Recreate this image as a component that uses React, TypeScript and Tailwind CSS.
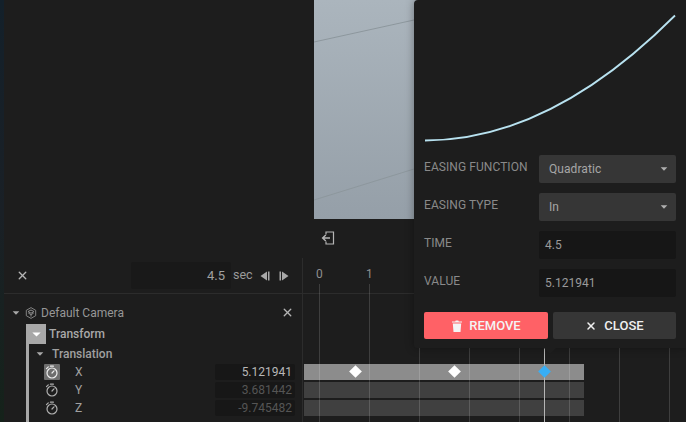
import React from 'react';
import { X } from 'lucide-react';

const Caret = ({ className }: { className: string }) => (
  <svg viewBox="0 0 10 6" className={className}>
    <path d="M0 0.5h10L5 5.5z" fill="currentColor" />
  </svg>
);

const Stopwatch = () => (
  <svg viewBox="0 0 14 14" className="h-[14px] w-[14px]" fill="none" stroke="currentColor" strokeWidth="1.2">
    <circle cx="7" cy="8" r="5" />
    <path d="M7 8l2-2.2M1.5 3.6l1.8-1.7M5.4 1.2h3" strokeLinecap="round" />
  </svg>
);

const CubeHex = () => (
  <svg viewBox="0 0 12 12" className="h-[12px] w-[12px] text-[#8f8f8f]" fill="none" stroke="currentColor" strokeWidth="0.9">
    <path d="M6 0.6l4.7 2.7v5.4L6 11.4 1.3 8.7V3.3z" />
    <path d="M6 3l3 1.6L6 6.2 3 4.6zM3.4 6.2L6 7.6l2.6-1.4M6 7.6v2" strokeWidth="1" />
  </svg>
);

const StepIcon = ({ dir }: { dir: 'prev' | 'next' }) => (
  <svg viewBox="0 0 10 10" className="h-[10px] w-[10px] text-[#a8a8a8]" fill="currentColor">
    {dir === 'prev' ? <path d="M7 0.5v9L0.5 5zM8 0.5h1.5v9H8z" /> : <path d="M3 0.5v9L9.5 5zM0.5 0.5H2v9H0.5z" />}
  </svg>
);

const ExitIcon = () => (
  <svg viewBox="0 0 14 14" className="h-[14px] w-[14px] text-[#b5b5b5]" fill="none" stroke="currentColor" strokeWidth="1.2">
    <path d="M5 3.5V1h7.5v12H5v-2.5" />
    <path d="M9 7H2M4.8 4L1.6 7l3.2 3" strokeWidth="1.4" />
  </svg>
);

const TrashIcon = () => (
  <svg viewBox="0 0 10 12" className="h-[12px] w-[10px]" fill="currentColor">
    <path d="M0 1.4h3.2L3.7.4h2.6l.5 1H10v1.2H0zM.8 3.4h8.4l-.7 8.6H1.5z" />
  </svg>
);

const FieldLabel = ({ children }: { children: React.ReactNode }) => (
  <div className="h-[28px] w-[115px] pt-[4px] text-[12px] leading-[16px] tracking-[0.07px] text-[#8a8a8a]">{children}</div>
);

const SelectField = ({ value }: { value: string }) => (
  <div className="flex h-[28px] w-[137px] items-center justify-between rounded-[2px] bg-[#363636] pl-[10px] pr-[8px] text-[12px] tracking-[0.07px] text-[#a6a6a6]">
    <span>{value}</span>
    <Caret className="h-[4px] w-[8px] text-[#b0b0b0]" />
  </div>
);

const InputField = ({ value }: { value: string }) => (
  <div className="flex h-[28px] w-[137px] items-center rounded-[2px] bg-[#161616] pl-[6px] text-[12px] text-[#9a9a9a]">
    {value}
  </div>
);

const ChannelRow = ({ axis, value, active }: { axis: string; value: string; active?: boolean }) => (
  <div className="mb-[2px] flex h-[16px] items-center">
    <div className={`ml-[40px] flex h-[16px] w-[16px] items-center justify-center rounded-[1px] ${active ? 'bg-[#6e6e6e] text-[#eeeeee]' : 'text-[#b0b0b0]'}`}>
      <Stopwatch />
    </div>
    <span className="ml-[15px] w-[140px] text-[12px] text-[#a0a0a0]">{axis}</span>
    <div className={`flex h-[16px] w-[80px] items-center justify-end rounded-[2px] bg-[#171717] pr-[3px] text-[12px] ${active ? 'text-[#b8b8b8]' : 'text-[#555555]'}`}>
      {value}
    </div>
  </div>
);

const TrackRow = ({ active, children }: { active?: boolean; children?: React.ReactNode }) => (
  <div className={`relative mb-[2px] h-[16px] w-[280px] ${active ? 'bg-[#8c8c8c]' : 'bg-[#404040]'}`}>{children}</div>
);

const Diamond = ({ left, color }: { left: number; color: string }) => (
  <div className={`absolute top-[3px] z-10 h-[9px] w-[9px] rotate-45 ${color}`} style={{ left }} />
);

const gridLines = [16, 66, 116, 166, 216, 266, 316, 366];

export default function App() {
  return (
    <div className="relative flex h-[422px] w-[686px] overflow-hidden bg-[#1d1d1d] font-['Roboto',sans-serif]">
      {/* backdrop strip */}
      <div className="w-[4px] shrink-0 bg-gradient-to-b from-[#13202a] via-[#1a2026] to-[#15221a]" />

      <div className="flex min-w-0 flex-1 flex-col">
        {/* Viewport */}
        <div className="flex h-[258px] shrink-0">
          <div className="w-[310px] shrink-0" />
          <div className="flex flex-1 flex-col">
            <div className="h-[219px] bg-gradient-to-b from-[#abb5bd] to-[#959fa8]">
              <svg width="100" height="219" className="block">
                <path d="M0 42L100 20M0 200L100 169" stroke="#8d979d" strokeWidth="1" fill="none" />
              </svg>
            </div>
            <div className="flex flex-1 items-start pl-[7px] pt-[12px]">
              <ExitIcon />
            </div>
          </div>
        </div>

        {/* Timeline */}
        <div className="flex flex-1">
          <div className="w-[299px] shrink-0 border-r border-[#2c2c2c]">
            <div className="flex h-[36px] items-center border-b border-[#2c2c2c]">
              <X size={13} strokeWidth={2.5} className="ml-[12px] text-[#b5b5b5]" />
              <div className="ml-[102px] flex h-[27px] w-[100px] items-center justify-end rounded-[2px] bg-[#191919] pr-[6px] text-[13px] text-[#a0a0a0]">
                4.5
              </div>
              <span className="ml-[2px] text-[12.5px] text-[#9a9a9a]">sec</span>
              <div className="ml-[7px] flex gap-[9px]">
                <StepIcon dir="prev" />
                <StepIcon dir="next" />
              </div>
            </div>

            <div className="flex h-[30px] items-center pt-[7px]">
              <Caret className="ml-[8px] h-[4px] w-[8px] text-[#a8a8a8]" />
              <div className="ml-[5px]"><CubeHex /></div>
              <span className="ml-[4px] w-[240px] text-[12px] text-[#979797]">Default Camera</span>
              <X size={13} strokeWidth={2.5} className="text-[#b5b5b5]" />
            </div>

            <div className="ml-[22px] border-l-[3px] border-[#a8a8a8]">
              <div className="flex h-[20px] items-center">
                <div className="-ml-[3px] flex h-[20px] w-[20px] items-center justify-center bg-[#a8a8a8]">
                  <Caret className="h-[5px] w-[9px] text-white" />
                </div>
                <span className="ml-[3px] text-[12px] font-medium text-[#a8a8a8]">Transform</span>
              </div>
              <div className="flex h-[20px] items-center">
                <Caret className="ml-[7px] h-[4px] w-[8px] text-[#a8a8a8]" />
                <span className="ml-[8px] text-[12px] font-medium text-[#a0a0a0]">Translation</span>
              </div>
            </div>
            <div className="relative">
              <div className="absolute bottom-0 left-[22px] top-0 h-[60px] w-[3px] bg-[#a8a8a8]" />
              <ChannelRow axis="X" value="5.121941" active />
              <ChannelRow axis="Y" value="3.681442" />
              <ChannelRow axis="Z" value="-9.745482" />
            </div>
          </div>

          <div className="relative flex-1 overflow-hidden">
            <div className="flex h-[36px] items-start border-b border-[#2c2c2c] pl-[13px] pt-[7px] text-[12px] text-[#8f8f8f]">
              <span className="w-[50px]">0</span>
              <span>1</span>
            </div>
            <div className="pt-[70px] pl-[1px]">
              <TrackRow active>
                <Diamond left={47} color="bg-white" />
                <Diamond left={146} color="bg-white" />
                <Diamond left={236} color="bg-[#38aef5]" />
              </TrackRow>
              <TrackRow />
              <TrackRow />
            </div>
            {gridLines.map((x) => (
              <div key={x} className="absolute bottom-0 top-[26px] w-px bg-white/15" style={{ left: x }} />
            ))}
            <div className="absolute bottom-0 left-[241px] top-[90px] w-px bg-[#b5b5b5]" />
          </div>
        </div>
      </div>

      {/* Keyframe popover */}
      <div className="absolute right-0 top-0 z-20 h-[348px] w-[272px] rounded-bl-[3px] rounded-tl-[4px] bg-[#1d1d1d] shadow-[0_0_8px_rgba(0,0,0,0.35)]">
        <svg width="272" height="155" className="block">
          <path d="M11 140.5Q136 140.5 261 15.5" stroke="#b8e2f0" strokeWidth="1.8" fill="none" />
        </svg>
        <div className="flex flex-wrap gap-y-[10px] pl-[10px]">
          <div className="flex"><FieldLabel>EASING FUNCTION</FieldLabel><SelectField value="Quadratic" /></div>
          <div className="flex"><FieldLabel>EASING TYPE</FieldLabel><SelectField value="In" /></div>
          <div className="flex"><FieldLabel>TIME</FieldLabel><InputField value="4.5" /></div>
          <div className="flex"><FieldLabel>VALUE</FieldLabel><InputField value="5.121941" /></div>
        </div>
        <div className="mt-[15px] flex gap-[5px] pl-[10px]">
          <button className="flex h-[27px] w-[124px] items-center justify-center gap-[7px] rounded-[2px] bg-[#ff6166] pl-[1px] text-[13px] font-medium text-[#f4f4f4]">
            <TrashIcon />
            REMOVE
          </button>
          <button className="flex h-[27px] w-[123px] items-center justify-center gap-[7px] rounded-[2px] bg-[#363636] text-[13px] font-medium text-[#f0f0f0]">
            <X size={12} strokeWidth={3} />
            CLOSE
          </button>
        </div>
        <div className="absolute left-[130px] top-[348px] h-0 w-0 border-x-[6px] border-t-[6px] border-x-transparent border-t-[#1d1d1d]" />
      </div>
    </div>
  );
}
